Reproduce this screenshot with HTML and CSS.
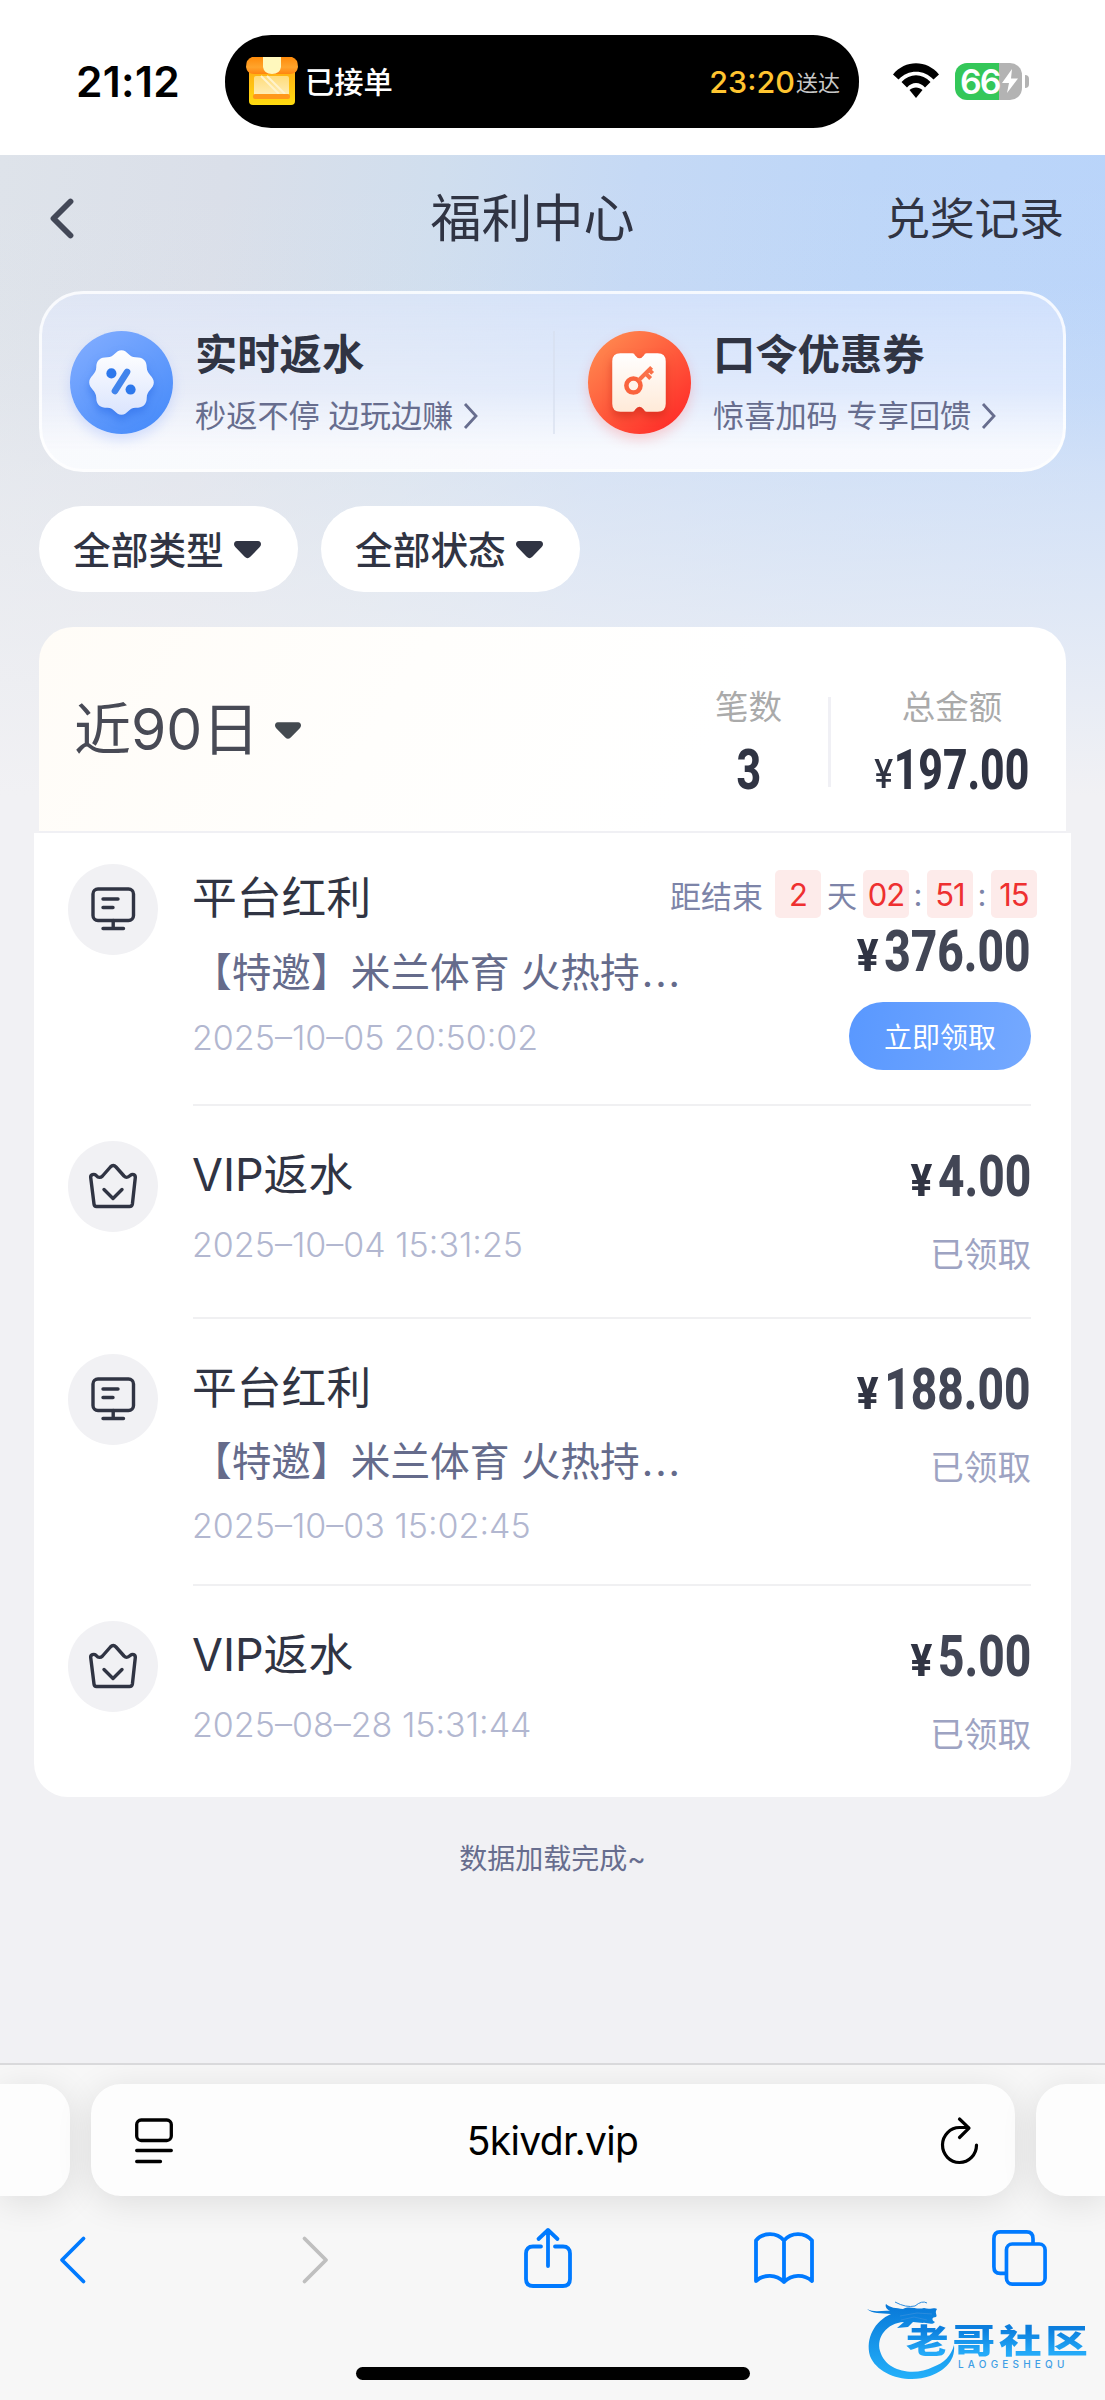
FILE: index.html
```html
<!DOCTYPE html>
<html lang="zh-CN">
<head>
<meta charset="utf-8">
<title>福利中心</title>
<link rel="stylesheet" href="styles.css">
</head>
<body>
<svg width="0" height="0" class="defs" aria-hidden="true">
  <defs>
    <symbol id="board" viewBox="0 0 90 90"><g fill="none" stroke="#303443" stroke-width="3.4" stroke-linecap="round" stroke-linejoin="round"><rect x="25" y="25" width="40.500" height="31.500" rx="5"/><path d="M35 35H50M35 43.500H45M45.200 56.500V64.500M35 64.500H55.500"/></g></symbol>
    <symbol id="crown" viewBox="0 0 90 90"><g fill="none" stroke="#303443" stroke-width="3.400" stroke-linecap="round" stroke-linejoin="round"><path d="M28.500 65.500H61.500Q64 65.500 64.400 63L67.300 36.500C67.500 33.500 64.500 32.500 62.500 34.300C59.500 37 58 37 56 35L48 26Q45.200 23 42.400 26L34.500 35C32.500 37 30.500 37 28 34.300C26 32.500 22.300 33.500 22.700 36.500L26 63Q26.300 65.500 28.500 65.500Z"/><path d="M36 48.500L45 57.500L54 48.500"/></g></symbol>
    <symbol id="caret" viewBox="0 0 27 18"><path d="M3 0H24Q27 .4 27 3.200Q27 4.800 25.500 6.300L16.300 15.800Q13.500 18.500 10.700 15.800L1.500 6.300Q0 4.800 0 3.200Q0 .4 3 0Z"/></symbol>
    <symbol id="more" viewBox="0 0 16 28"><path d="M2 2L13 14L2 26" fill="none" stroke="#676d8e" stroke-width="2.800"/></symbol>
  </defs>
</svg>

<header class="status">
  <div class="time">21:12</div>
  <div class="island">
    <svg class="shop" viewBox="0 0 52 50">
      <defs>
        <linearGradient id="shopBody" x2="0" y2="1"><stop stop-color="#ffa914"/><stop offset="1" stop-color="#ffdc10"/></linearGradient>
        <linearGradient id="shopGlass" x2="0" y2="1"><stop stop-color="#ffdc7a"/><stop offset="1" stop-color="#ffeeb8"/></linearGradient>
        <linearGradient id="shopRoof" x2="0" y2="1"><stop stop-color="#ff8b0a"/><stop offset=".6" stop-color="#ffa42c"/><stop offset="1" stop-color="#ff8410"/></linearGradient>
      </defs>
      <rect x="3" y="10" width="46" height="39" rx="4" fill="url(#shopBody)"/>
      <rect x="8" y="20" width="35" height="20" rx="2" fill="url(#shopGlass)"/>
      <path d="M15 20L33 38M21 20L39 38" stroke="#fff3cc" stroke-width="2"/>
      <rect x="7" y="38" width="37" height="5" rx="2" fill="#ff981b"/>
      <path d="M6 1H46Q52 3 52 11Q51 18 44 18H8Q1 18 0 11Q0 3 6 1Z" fill="url(#shopRoof)"/>
      <path d="M17 1H35V11Q34 18 26 18Q18 18 17 11Z" fill="#fff8bd"/>
    </svg>
    <span class="order">已接单</span>
    <span class="eta">23:20</span><span class="eta-label">送达</span>
  </div>
  <svg class="wifi" viewBox="0 0 46 35"><path d="M0 11.500C12-3.500 34-3.500 46 11.500L40.500 16.500C31 6 15 6 5.500 16.500ZM8.500 19C17 10 29 10 37.500 19L32 24.500C27 18.500 19 18.500 14 24.500ZM16.500 27C20 23.500 26 23.500 29.500 27L23 35Z"/></svg>
  <div class="battery"><span>66</span><svg viewBox="0 0 16 24"><path d="M10 0L0 14H7L5 24L16 9.500H9Z" fill="#fff"/></svg></div>
  <i class="battery-tip"></i>
</header>

<main class="page">
  <nav class="nav">
    <svg class="back" viewBox="0 0 24 41"><path d="M20.500 3.500L3.500 20.500L20.500 37.500" fill="none" stroke="#434857" stroke-width="5.800" stroke-linecap="round" stroke-linejoin="round"/></svg>
    <h1>福利中心</h1>
    <a class="records">兑奖记录</a>
  </nav>

  <section class="promo">
    <div class="promo-item">
      <svg class="promo-icon blue" viewBox="0 0 102 102">
        <defs><linearGradient id="blueDisc" x1=".1" y1="0" x2=".8" y2="1"><stop stop-color="#82adff"/><stop offset="1" stop-color="#478bfa"/></linearGradient>
        <linearGradient id="badge" x2="0" y2="1"><stop stop-color="#fff"/><stop offset="1" stop-color="#dae4fd"/></linearGradient></defs>
        <circle cx="51" cy="51" r="51" fill="url(#blueDisc)"/>
        <path class="badge" d="M51 19C57 19 58 26 65 26C72 26 76 29 76 36C76 43 83 45 83 51C83 57 76 59 76 66C76 73 72 76 65 76C58 76 57 83 51 83C45 83 44 76 37 76C30 76 26 73 26 66C26 59 19 57 19 51C19 45 26 43 26 36C26 29 30 26 37 26C44 26 45 19 51 19Z" fill="url(#badge)"/>
        <circle cx="41" cy="42" r="5" fill="#2d78ec"/><circle cx="60" cy="58" r="5" fill="#2d78ec"/><path d="M56.500 40.500L44.500 59.500" stroke="#4184ec" stroke-width="6.500" stroke-linecap="round"/>
      </svg>
      <div class="promo-copy"><h2>实时返水</h2><p>秒返不停 边玩边赚<svg class="more"><use href="#more"/></svg></p></div>
    </div>
    <i class="promo-line"></i>
    <div class="promo-item">
      <svg class="promo-icon red" viewBox="0 0 102 102">
        <defs><linearGradient id="redDisc" x1=".1" y1=".1" x2=".8" y2=".9"><stop stop-color="#ff884f"/><stop offset="1" stop-color="#ff322b"/></linearGradient>
        <linearGradient id="ticket" x2="0" y2="1"><stop stop-color="#fff"/><stop offset="1" stop-color="#ffead8"/></linearGradient></defs>
        <circle cx="51" cy="51" r="51" fill="url(#redDisc)"/>
        <path class="ticket" d="M32 22H44Q46 22 46.500 24Q51 30 55.500 24Q56 22 58 22H69Q77 22 77 30V72Q77 80 69 80H58Q56 80 55.500 78Q51 72 46.500 78Q46 80 44 80H32Q24 80 24 72V30Q24 22 32 22Z" fill="url(#ticket)"/>
        <circle cx="45" cy="54" r="7" fill="none" stroke="#fa633d" stroke-width="4.500"/><path d="M50 49L63 36M57 42L62 47M60 38L64 42" stroke="#fa7048" stroke-width="4"/>
      </svg>
      <div class="promo-copy"><h2>口令优惠券</h2><p>惊喜加码 专享回馈<svg class="more"><use href="#more"/></svg></p></div>
    </div>
  </section>

  <div class="filters">
    <button>全部类型<svg class="caret"><use href="#caret"/></svg></button>
    <button>全部状态<svg class="caret"><use href="#caret"/></svg></button>
  </div>

  <section class="summary">
    <div class="range">近90日<svg class="caret small"><use href="#caret"/></svg></div>
    <div class="stat count"><span class="label">笔数</span><span class="value"><b class="num">3</b></span></div>
    <i class="stat-line"></i>
    <div class="stat total"><span class="label">总金额</span><span class="value"><span class="yen-thin">¥</span><b class="num">197.00</b></span></div>
  </section>

  <section class="list">
    <article class="row row-claim">
      <div class="avatar"><svg><use href="#board"/></svg></div>
      <div class="body">
        <div class="info"><h3>平台红利</h3><p>【特邀】米兰体育 火热持<span class="dots">...</span></p><time>2025–10–05 20:50:02</time></div>
        <div class="side">
          <div class="countdown"><span>距结束</span><b class="first">2</b><span class="day">天</span><b>02</b><span class="colon">:</span><b>51</b><span class="colon">:</span><b>15</b></div>
          <div class="amount"><span class="yen">¥</span><b class="num">376.00</b></div>
          <button class="claim">立即领取</button>
        </div>
      </div>
    </article>
    <article class="row row-short">
      <div class="avatar"><svg><use href="#crown"/></svg></div>
      <div class="body">
        <div class="info"><h3>VIP返水</h3><time>2025–10–04 15:31:25</time></div>
        <div class="side"><div class="amount"><span class="yen">¥</span><b class="num">4.00</b></div><span class="state">已领取</span></div>
      </div>
    </article>
    <article class="row row-long">
      <div class="avatar"><svg><use href="#board"/></svg></div>
      <div class="body">
        <div class="info"><h3>平台红利</h3><p>【特邀】米兰体育 火热持<span class="dots">...</span></p><time>2025–10–03 15:02:45</time></div>
        <div class="side"><div class="amount"><span class="yen">¥</span><b class="num">188.00</b></div><span class="state">已领取</span></div>
      </div>
    </article>
    <article class="row row-short last">
      <div class="avatar"><svg><use href="#crown"/></svg></div>
      <div class="body">
        <div class="info"><h3>VIP返水</h3><time>2025–08–28 15:31:44</time></div>
        <div class="side"><div class="amount"><span class="yen">¥</span><b class="num">5.00</b></div><span class="state">已领取</span></div>
      </div>
    </article>
  </section>
  <p class="done">数据加载完成~</p>
</main>

<footer class="browser">
  <div class="tabs">
    <div class="tab"></div>
    <div class="tab current">
      <svg class="reader" viewBox="0 0 38 46"><g fill="none" stroke="#000" stroke-width="3.300" stroke-linecap="round"><rect x="1.700" y="2" width="34.600" height="20.500" rx="4.500"/><path d="M1.700 32.500H36.300M1.700 43.500H25.500"/></g></svg>
      <span class="url">5kivdr.vip</span>
      <svg class="reload" viewBox="0 0 38 47"><g fill="none" stroke="#000" stroke-width="3.200" stroke-linecap="round" stroke-linejoin="round"><path d="M35.500 28A17 17.500 0 1 1 18.700 10.500H27"/><path d="M18.500 2L28 11.200L18.500 20.500"/></g></svg>
    </div>
    <div class="tab"></div>
  </div>
  <div class="tools">
    <svg class="t-back" viewBox="0 0 27 48"><path d="M24.500 2.500L3 24L24.500 45.500"/></svg>
    <svg class="t-next" viewBox="0 0 27 48"><path d="M2.500 2.500L24 24L2.500 45.500"/></svg>
    <svg class="t-share" viewBox="0 0 48 60"><path d="M17 18.500H9Q2 18.500 2 25.500V51Q2 58 9 58H39Q46 58 46 51V25.500Q46 18.500 39 18.500H31M24 38V2M14.500 11L24 2L33.500 11"/></svg>
    <svg class="t-book" viewBox="0 0 60 52"><path d="M30 8.500C23 0 9 0 2 8.500V49C10 42 22 42 30 50C38 42 50 42 58 49V8.500C51 0 37 0 30 8.500V50"/></svg>
    <svg class="t-tabs" viewBox="0 0 57 58"><path d="M42.500 13.500V9Q42.500 2 36 2H8.500Q2 2 2 9V38Q2 45 8.500 45H14"/><rect x="15" y="14.500" width="40" height="41.500" rx="6"/></svg>
  </div>
  <i class="home"></i>
  <div class="mark">
    <svg viewBox="0 0 90 80">
      <defs><linearGradient id="dragon" x2="0" y2="1"><stop stop-color="#0878d8"/><stop offset="1" stop-color="#24b0fa"/></linearGradient></defs>
      <path fill="url(#dragon)" d="M1 9C8 13 17 10 24 11C20 9 19 6 20 4C24 8 30 8 37 9C44 5 50 10 58 8C64 10 69 7 71 9C68 13 72 15 70 17C66 17 65 20 69 22C66 26 60 22 57 23L47 22L42 27L31 28L38 22C21 23 10 37 14 51C20 73 50 76 67 67C78 63 85 56 88 45C90 63 75 72 64 76C42 84 12 76 4 56C-1 38 9 21 25 14C15 13 6 14 1 9Z"/>
      <path d="M29 2Q40 8 49 6Q56 0 61 3M34 16L51 13L66 14M35 20L48 17L61 20" fill="none" stroke="#2b8cde" stroke-width="1"/>
    </svg>
    <span class="mark-name">老哥社区</span>
    <span class="mark-latin">LAOGESHEQU</span>
  </div>
</footer>
</body>
</html>
```
FILE: styles.css
```css
* { box-sizing: border-box; margin: 0; padding: 0; }
body { width: 1105px; height: 2400px; overflow: hidden; background: #fff; font-family: Inter, "Noto Sans CJK SC", sans-serif; color: #303443; display: flex; flex-direction: column; }
svg { display: block; flex: none; overflow: visible; }
button { border: 0; font: inherit; color: inherit; }
i { display: block; }
.defs { position: absolute; }

.status { height: 155px; flex: none; display: flex; align-items: center; }
.time { width: 225px; padding-left: 76px; font-size: 42.500px; line-height: 50px; font-weight: 600; color: #000; margin-top: 8px; letter-spacing: .3px; }
.island { width: 634px; height: 93px; border-radius: 46px; background: #000; display: flex; align-items: center; padding: 0 19px 0 21px; margin-top: 7px; color: #fff; }
.shop { width: 52px; height: 50px; }
.order { margin: -3px 0 0 7px; font-size: 29.300px; font-weight: 450; }
.eta { margin-left: auto; font-size: 30.500px; color: #ffc530; font-weight: 450; }
.eta-label { font-size: 22px; color: #c8c8c8; margin-left: 1px; }
.wifi { width: 46px; height: 35px; margin: 5px 0 0 34px; }
.battery { margin: 7px 0 0 16px; width: 67px; height: 37px; border-radius: 12px; background: linear-gradient(90deg, #34c759 66%, #b3b3b3 66%); display: flex; align-items: center; padding-left: 5px; color: #fff; font-size: 34px; font-weight: 600; letter-spacing: -2px; }
.battery svg { width: 16px; height: 24px; margin-left: 2px; }
.battery-tip { width: 4px; height: 13px; margin: 7px 0 0 3px; border-radius: 0 5px 5px 0; background: #b3b3b3; }

.page { height: 1908px; flex: none; display: flex; flex-direction: column; background: linear-gradient(180deg, rgba(241,241,244,0) 0, rgba(241,241,244,.04) 130px, rgba(241,241,244,.2) 235px, rgba(241,241,244,.44) 317px, rgba(241,241,244,.67) 445px, #f1f1f4 640px), linear-gradient(97deg, #dee3ea 0, #dadfe9 17%, #d0deee 33%, #c5d9f5 48%, #bdd6f8 65%, #b9d4fa 85%); }
.nav { height: 136px; flex: none; display: grid; grid-template-columns: 300px 1fr 300px; align-items: center; padding: 0 41px 8px 50px; }
.back { width: 24px; height: 41px; margin-top: -2px; }
.nav h1 { font-size: 51px; line-height: 70px; font-weight: 400; text-align: center; margin-left: -49px; }
.records { font-size: 44.700px; line-height: 60px; text-align: right; }

.promo { height: 181px; flex: none; margin: 0 39px; border: 3px solid rgba(255,255,255,.78); border-bottom-color: rgba(255,255,255,.6); border-radius: 44px; background: linear-gradient(180deg, rgba(224,233,255,.5), rgba(236,241,255,.65) 55%, rgba(250,251,254,.93) 88%) border-box; display: flex; padding: 37px 28px 0; }
.promo-item { width: 483px; flex: none; display: flex; }
.promo-line + .promo-item { width: 480px; padding-left: 33px; }
.promo-icon { width: 103px; height: 103px; border-radius: 50%; }
.blue { box-shadow: 0 6px 12px rgba(115,150,255,.25); }
.red { box-shadow: 0 6px 12px rgba(255,90,90,.25); }
.badge { filter: drop-shadow(0 5px 4px rgba(40,105,230,.55)); }
.ticket { filter: drop-shadow(0 5px 4px rgba(190,35,20,.5)); }
.promo-copy { margin-left: 22px; }
.promo-copy h2 { font-size: 42.300px; line-height: 48px; font-weight: 600; white-space: nowrap; }
.promo-copy p { display: flex; align-items: center; white-space: nowrap; font-size: 31.200px; line-height: 40px; margin-top: 17px; color: #676d8e; }
.more { width: 16px; height: 28px; margin-left: 10px; }
.promo-line { width: 2px; height: 103px; background: rgba(215,222,238,.65); flex: none; }

.filters { height: 155px; flex: none; padding: 34px 39px 0; display: flex; gap: 23px; }
.filters button { width: 259px; height: 86px; border-radius: 43px; background: #fff; display: flex; align-items: center; padding: 0 0 3px 34px; font-size: 37.700px; font-weight: 500; }
.caret { width: 27px; height: 18px; margin: 5px 0 0 10px; fill: #303443; }

.summary { height: 206px; flex: none; margin: 0 39px; border-radius: 34px 34px 0 0; background: linear-gradient(120deg, #fffcf7, #fffefc 35%, #fff 65%); border-bottom: 2px solid #f0f0f4; display: flex; align-items: flex-start; }
.range { width: 644px; flex: none; height: 204px; padding: 0 0 9px 35px; font-size: 57px; display: flex; align-items: center; color: #484a55; }
.caret.small { width: 26px; margin: 12px 0 0 16px; fill: #444a50; }
.stat { display: flex; flex-direction: column; align-items: center; flex: none; padding-top: 60px; }
.count { width: 131px; }
.total { width: 242px; }
.label { font-size: 33.500px; line-height: 40px; color: #aaa; }
.value { display: flex; align-items: center; justify-content: center; height: 50px; margin-top: 18px; transform: scaleX(.775); }
.stat-line { width: 3px; flex: none; height: 90px; margin: 70px 0 0 14px; background: #f0f0f5; }
.num { font-family: Roboto, sans-serif; font-weight: 800; white-space: nowrap; }
.value .num { font-size: 55px; line-height: 50px; }
.yen-thin { font-size: 39px; line-height: 50px; font-weight: 500; margin: 8px 2px 0 0; transform: scaleX(1.150); }

.list { height: 964px; flex: none; margin: 0 34px; background: #fff; border-radius: 0 0 34px 34px; }
.row { display: flex; padding: 35px 40px 0 34px; height: 213px; }
.row-claim { height: 273px; padding-top: 31px; }
.row-long { height: 267px; }
.avatar { width: 90px; height: 91px; border-radius: 50%; background: #f1f1f4; flex: none; }
.avatar svg { width: 90px; height: 90px; }
.body { flex: 1; margin-left: 35px; display: flex; justify-content: space-between; border-bottom: 2px solid #f0f0f2; padding-top: 4px; }
.last .body { border-bottom: 0; }
.info { flex: none; margin-left: -1px; }
.info h3 { font-size: 44.800px; line-height: 60px; font-weight: 400; }
.info p { font-size: 39.700px; line-height: 60px; margin-top: 15px; color: #656b8b; white-space: nowrap; }
.dots { letter-spacing: 2px; margin-left: 2px; }
.info time { display: block; font-size: 34px; line-height: 40px; margin-top: 15px; color: #b2b7d0; font-weight: 350; white-space: nowrap; }
.row-long p, .row-long time { margin-top: 14px; }
.row-short time { margin-top: 20px; }
.side { display: flex; flex-direction: column; align-items: flex-end; width: 0; }
.countdown { display: flex; align-items: center; height: 48px; margin: 2px -6px 0 0; font-size: 31px; color: #7d84a8; white-space: nowrap; flex: none; }
.countdown b { width: 46px; height: 48px; line-height: 49px; text-align: center; border-radius: 5px; background: #fdebea; color: #ee3030; font-weight: 400; font-size: 31px; letter-spacing: -1px; }
.countdown .first { margin-left: 12px; }
.day { margin: 0 6px; font-size: 30px; }
.colon { width: 18px; text-align: center; }
.amount { height: 60px; display: flex; align-items: center; color: #424655; flex: none; margin-top: 2px; white-space: nowrap; transform: scaleX(.8); transform-origin: 100% 50%; }
.row-claim .amount { margin-top: 4px; }
.amount .num { font-size: 57.500px; line-height: 60px; }
.yen { font-family: Roboto, sans-serif; font-weight: 800; font-size: 44px; line-height: 60px; color: #303443; margin: 8px 9px 0 0; transform: scaleX(1.150); }
.claim { width: 182px; height: 68px; flex: none; border-radius: 34px; margin-top: 20px; color: #fff; font-size: 28px; background: linear-gradient(100deg, #5998ff, #75a9ff); }
.state { font-size: 33.600px; line-height: 40px; margin-top: 28px; color: #9da3c2; white-space: nowrap; }
.done { text-align: center; font-size: 28px; line-height: 40px; margin-top: 42px; color: #676d8e; }

.browser { height: 337px; position: relative; background: #f7f7f7; border-top: 2px solid #d9d9db; overflow: hidden; }
.tabs { display: grid; grid-template-columns: 70px 924px 70px; gap: 21px; height: 112px; margin-top: 19px; }
.tab { background: #fdfdfd; box-shadow: 0 6px 36px rgba(0,0,0,.11); border-radius: 0 30px 30px 0; }
.tab:last-child { border-radius: 30px 0 0 30px; }
.current { border-radius: 30px; display: flex; align-items: center; justify-content: space-between; padding: 0 36px 0 44px; }
.reader { width: 38px; height: 46px; margin-top: 2px; }
.url { font-size: 39px; line-height: 50px; color: #000; margin: 2px 9px 0 0; letter-spacing: -.7px; }
.reload { width: 38px; height: 47px; }
.tools { display: flex; align-items: center; height: 60px; margin: 32px 0 0 59px; }
.tools svg { fill: none; stroke: #007aff; stroke-width: 3.800; stroke-linecap: round; stroke-linejoin: round; }
.t-back, .t-next { width: 27px; height: 48px; margin-top: 3px; }
.tools .t-next { stroke: #bfbfbf; margin-left: 216px; }
.t-share { width: 48px; height: 60px; margin-left: 195px; }
.t-book { width: 60px; height: 52px; margin-left: 182px; }
.t-tabs { width: 57px; height: 56px; margin-left: 177px; }
.home { width: 394px; height: 13px; border-radius: 7px; background: #000; margin: 79px auto 0; }
.mark { position: absolute; left: 866px; top: 235px; width: 225px; height: 80px; }
.mark svg { width: 90px; height: 80px; }
.mark-name { position: absolute; left: 40px; top: 21px; font-size: 33px; line-height: 40px; font-weight: 900; letter-spacing: 3px; white-space: nowrap; transform: scaleX(1.290); transform-origin: 0 50%; background: linear-gradient(180deg, #0c7edd 20%, #24aaf8 80%); -webkit-background-clip: text; background-clip: text; color: transparent; }
.mark-latin { position: absolute; left: 92px; top: 58px; font-size: 10px; line-height: 12px; font-weight: 500; letter-spacing: 4.200px; color: #3e9ee5; }
```
